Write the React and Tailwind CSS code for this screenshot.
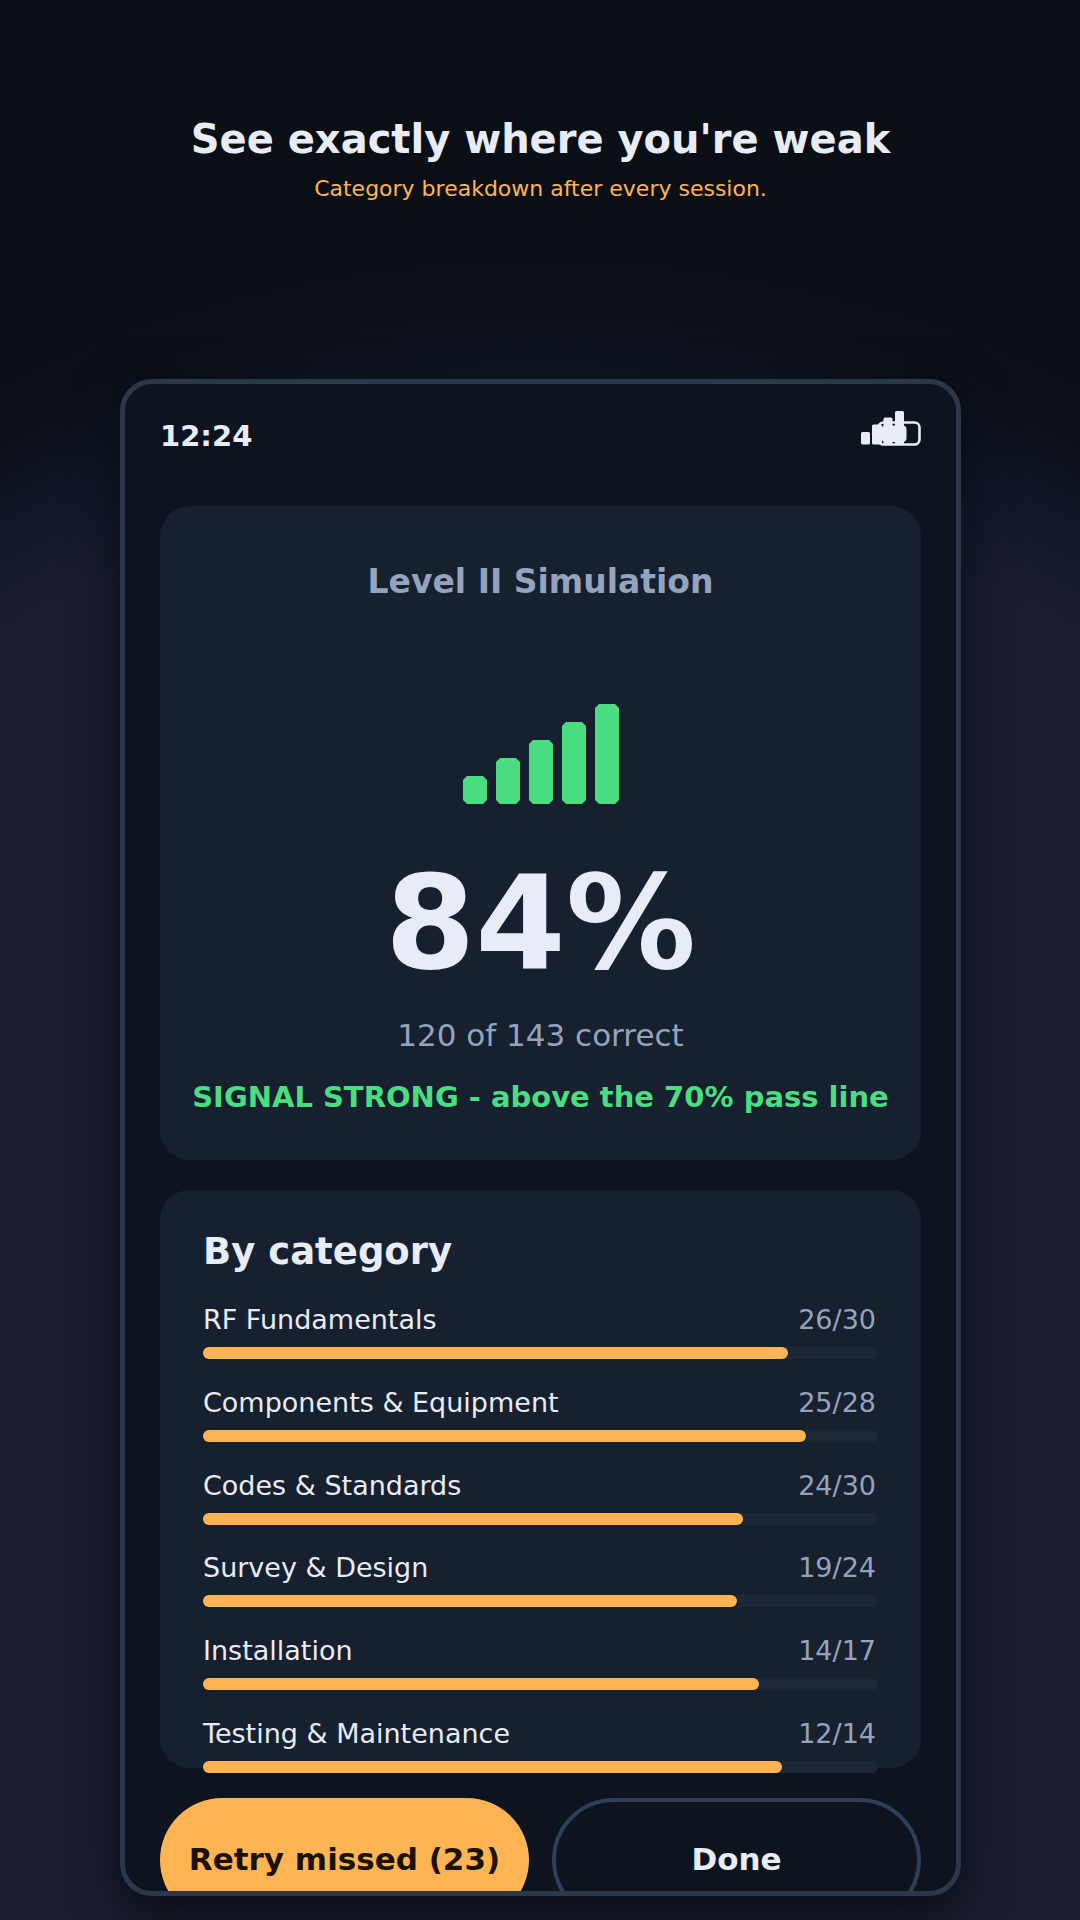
import React from 'react';

const categories = [
  { name: 'RF Fundamentals', correct: 26, total: 30 },
  { name: 'Components & Equipment', correct: 25, total: 28 },
  { name: 'Codes & Standards', correct: 24, total: 30 },
  { name: 'Survey & Design', correct: 19, total: 24 },
  { name: 'Installation', correct: 14, total: 17 },
  { name: 'Testing & Maintenance', correct: 12, total: 14 },
];

function StatusIcons() {
  return (
    <svg width="60" height="36" viewBox="0 0 60 36" fill="none" aria-hidden="true">
      <rect x="17.5" y="11.5" width="41" height="22" rx="5" stroke="#e8ecf6" strokeWidth="2.6" />
      <rect x="20.5" y="14.5" width="25" height="16.5" rx="4" fill="#e8ecf6" />
      <g fill="#e8ecf6">
        <rect x="0" y="21" width="9" height="12.5" rx="1.5" />
        <rect x="11" y="13.5" width="10" height="20" rx="1.5" />
        <rect x="22.5" y="6.5" width="9" height="27" rx="1.5" />
        <rect x="34" y="0" width="9" height="33.5" rx="1.5" />
      </g>
    </svg>
  );
}

function SignalBars() {
  return (
    <svg width="157" height="101" viewBox="0 0 157 101" fill="#4ade80" aria-hidden="true">
      <path d="M5 72H21L25 76V96L21 100H5L1 96V76Z" />
      <path d="M38 54H54L58 58V96L54 100H38L34 96V58Z" />
      <path d="M71 36H87L91 40V96L87 100H71L67 96V40Z" />
      <path d="M104 18H120L124 22V96L120 100H104L100 96V22Z" />
      <path d="M137 0H153L157 4V96L153 100H137L133 96V4Z" />
    </svg>
  );
}

function CategoryRow({ name, correct, total }) {
  return (
    <li>
      <div className="flex justify-between pr-0.5 text-[27px] leading-8">
        <span>{name}</span>
        <span className="text-[#94a3be]">{correct}/{total}</span>
      </div>
      <div className="mt-[11px] h-3 rounded-full bg-[#1c2738]">
        <div className="h-3 rounded-full bg-[#ffb454]" style={{ width: `${(correct / total) * 100}%` }} />
      </div>
    </li>
  );
}

export default function App() {
  return (
    <div className="flex h-screen flex-col overflow-hidden bg-[#0a0e15] bg-[radial-gradient(circle_1250px_at_50%_1500px,#1a1d2e_81%,#111726_89%,#0c111a_94%,#0a0e15_100%)] pr-[119px] pb-6 pl-30 font-['DejaVu_Sans',sans-serif] text-[#e8ecf6]">
      <header className="pt-[113px] pb-[174px] text-center">
        <h1 className="text-[40px] leading-[52px] font-bold">See exactly where you're weak</h1>
        <p className="mt-2 text-[22px] leading-8 text-[#ffb454]">Category breakdown after every session.</p>
      </header>

      <main className="flex min-h-0 flex-1 flex-col overflow-hidden rounded-[32px] border-5 border-[#2d374c] bg-[#0e141f] px-[35px] shadow-[0_16px_50px_rgba(4,10,16,0.8)]">
        <div className="flex h-[122px] shrink-0 items-start justify-between pt-[27px]">
          <span className="pt-[7px] text-[29px] leading-9 font-bold">12:24</span>
          <StatusIcons />
        </div>

        <section className="flex shrink-0 flex-col items-center rounded-[30px] bg-[#17202e] pt-14 pb-[43px] text-center">
          <h2 className="text-[33px] leading-10 font-bold text-[#94a3be]">Level II Simulation</h2>
          <div className="mt-[102px]">
            <SignalBars />
          </div>
          <p className="mt-[53px] text-[130px] leading-[130px] font-bold">84%</p>
          <p className="mt-[27px] text-[31px] leading-10 text-[#94a3be]">120 of 143 correct</p>
          <p className="mt-[22px] text-[29px] leading-10 font-bold text-[#4ade80]">SIGNAL STRONG - above the 70% pass line</p>
        </section>

        <section className="mt-[30px] flex h-[578px] shrink-0 flex-col rounded-[30px] bg-[#17202e] px-[43px] pt-10">
          <h2 className="text-[37px] leading-11 font-bold">By category</h2>
          <ul className="-mb-[5px] flex flex-1 flex-col justify-between pt-[30px]">
            {categories.map((c) => (
              <CategoryRow key={c.name} {...c} />
            ))}
          </ul>
        </section>

        <div className="mt-[30px] grid shrink-0 grid-cols-2 gap-[23px] text-[31px] font-bold">
          <button type="button" className="h-31 rounded-full bg-[#ffb454] pb-0.5 text-[#1a1203]">Retry missed (23)</button>
          <button type="button" className="h-31 rounded-full border-4 border-[#2f3f5a] pb-0.5">Done</button>
        </div>
      </main>
    </div>
  );
}
